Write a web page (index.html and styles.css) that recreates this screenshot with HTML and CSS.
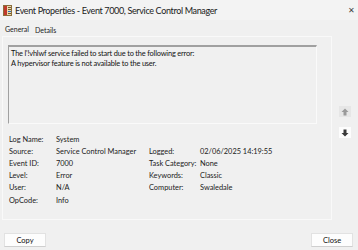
FILE: index.html
```html
<!DOCTYPE html>
<html>
<head>
<title>Event Properties</title>
<link rel="stylesheet" href="styles.css">
</head>
<body>
<div class="window">
  <div class="titlebar">
    <svg class="appicon" width="9" height="11" viewBox="0 0 9 11">
      <rect x="0.5" y="0.5" width="8" height="10" fill="#e8d9b0" stroke="#8a6d3b"/>
      <rect x="1" y="1" width="3" height="9" fill="#c0392b"/>
      <rect x="5" y="2" width="3" height="1" fill="#7a5a2a"/>
      <rect x="5" y="4" width="3" height="1" fill="#7a5a2a"/>
      <rect x="5" y="6" width="3" height="1" fill="#2d6bb5"/>
      <rect x="5" y="8" width="3" height="1" fill="#7a5a2a"/>
    </svg>
    <span class="title">Event Properties - Event 7000, Service Control Manager</span>
    <span class="close">&#x2715;</span>
  </div>

  <div class="tabs">
    <span class="tab active">General</span>
    <span class="tab">Details</span>
  </div>

  <div class="body">
    <div class="panel">
      <div class="message">The l'!vhlwf service failed to start due to the following error:
A hypervisor feature is not available to the user.</div>

      <div class="info">
        <span class="lbl">Log Name:</span><span class="val">System</span><span></span><span></span>
        <span class="lbl">Source:</span><span class="val">Service Control Manager</span><span class="lbl">Logged:</span><span class="val">02/06/2025 14:19:55</span>
        <span class="lbl">Event ID:</span><span class="val">7000</span><span class="lbl">Task Category:</span><span class="val">None</span>
        <span class="lbl">Level:</span><span class="val">Error</span><span class="lbl">Keywords:</span><span class="val">Classic</span>
        <span class="lbl">User:</span><span class="val">N/A</span><span class="lbl">Computer:</span><span class="val">Swaledale</span>
        <span class="lbl">OpCode:</span><span class="val">Info</span><span></span><span></span>
      </div>
    </div>

    <div class="side">
      <span class="arrow up">
        <svg width="8" height="8" viewBox="0 0 8 8"><path d="M4 0.5 L7.5 4 L5.5 4 L5.5 7.5 L2.5 7.5 L2.5 4 L0.5 4 Z" fill="#9a9a9a"/></svg>
      </span>
      <span class="arrow down">
        <svg width="8" height="8" viewBox="0 0 8 8"><path d="M4 7.5 L7.5 4 L5.5 4 L5.5 0.5 L2.5 0.5 L2.5 4 L0.5 4 Z" fill="#3a3a3a"/></svg>
      </span>
    </div>
  </div>

  <div class="buttons">
    <span class="btn">Copy</span>
    <span class="btn">Close</span>
  </div>
</div>
</body>
</html>
```

FILE: styles.css
```css
* { box-sizing: border-box; }
html, body { margin: 0; padding: 0; }
body { background: #f0f0f0; font-family: Lato, "Open Sans", sans-serif; color: #1a1a1a; }

.window { width: 358px; height: 250px; display: flex; flex-direction: column; overflow: hidden; }

.titlebar { height: 20px; display: flex; align-items: center; padding: 0 2px 0 3px; background: #f3f3f3; }
.appicon { display: block; margin-right: 3px; }
.title { font-size: 9px; letter-spacing: -0.35px; color: #222; flex: 1; white-space: nowrap; }
.close { font-size: 8px; color: #444; margin-right: 1px; }

.tabs { display: flex; height: 16px; align-items: flex-end; padding-left: 3px; }
.tab { font-size: 7px; padding: 0 2px 2px; color: #222; }
.tab.active { padding: 2px 4px 3px 2px; }

.body { display: flex; flex: 1; }

.panel {
  width: 330px; margin-left: 2px; height: 184px;
  border: 1px solid #f9f9f9; padding: 8px 14px 0 5px;
}

.message {
  height: 79px; white-space: pre; font-size: 7.4px; line-height: 9.5px; letter-spacing: -0.17px;
  border-top: 2px solid #a0a0a0; border-left: 1px solid #a0a0a0;
  border-right: 1px solid #fafafa; border-bottom: 1px solid #fafafa;
  padding: 2px 2px; color: #111;
}

.info {
  display: grid; grid-template-columns: 47px 93px 51px auto;
  grid-auto-rows: 12.2px; margin-top: 9px; padding-left: 1px;
  font-size: 7.4px; color: #222; align-items: center;
}

.side { display: flex; flex-direction: column; align-items: center; padding-top: 70px; width: 26px; gap: 10px; }
.arrow { width: 12px; height: 11px; display: flex; align-items: center; justify-content: center; }
.arrow.up { background: #e6e6e6; }
.arrow.down { background: #fdfdfd; }
.arrow svg { display: block; }

.buttons { display: flex; justify-content: space-between; padding: 0 5px 3px 4px; height: 30px; align-items: flex-end; }
.btn {
  width: 42px; height: 14px; display: flex; align-items: center; justify-content: center;
  background: #fdfdfd; border: 1px solid #e2e2e2; border-bottom-color: #cfcfcf;
  font-size: 7.5px; color: #111;
}
```
